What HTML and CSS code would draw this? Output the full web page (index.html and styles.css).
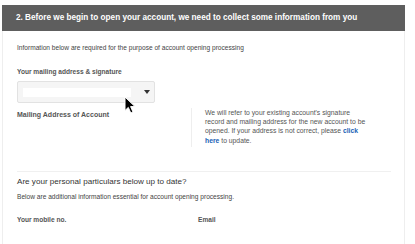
FILE: index.html
```html
<!DOCTYPE html>
<html lang="en">
<head>
    <meta charset="UTF-8">
    <title>Account Opening</title>
    <link rel="stylesheet" href="styles.css">
</head>
<body>
    <div class="panel">
        <div class="panel-head">2. Before we begin to open your account, we need to collect some information from you</div>
        <div class="panel-body">
            <p class="intro">Information below are required for the purpose of account opening processing</p>

            <p class="label">Your mailing address &amp; signature</p>
            <div class="select-box">
                <div class="select-value"></div>
                <span class="select-arrow"></span>
                <svg class="cursor" width="13" height="18" viewBox="0 0 13 18">
                    <path d="M1 1 L1 14.5 L4.3 11.4 L6.8 17 L9 16 L6.6 10.6 L11 10.6 Z" fill="#000" stroke="#fff" stroke-width="1"/>
                </svg>
            </div>

            <div class="address-row">
                <div class="address-label">Mailing Address of Account</div>
                <div class="address-note">
                    <span class="note-line">We will refer to your existing account's signature</span>
                    <span class="note-line">record and mailing address for the new account to be</span>
                    <span class="note-line">opened. If your address is not correct, please <a href="#">click</a></span>
                    <span class="note-line"><a href="#">here</a> to update.</span>
                </div>
            </div>

            <hr class="divider">

            <h2 class="section-title">Are your personal particulars below up to date?</h2>
            <p class="intro">Below are additional information essential for account opening processing.</p>

            <div class="field-row">
                <div class="label">Your mobile no.</div>
                <div class="label">Email</div>
            </div>
        </div>
    </div>
</body>
</html>
```

FILE: styles.css
```css
body {
    margin: 0;
    font-family: "Liberation Sans", Arial, sans-serif;
    background-color: #fff;
    color: #444;
}

.panel {
    margin: 5px 0 0 2px;
    width: 403px;
    height: 239px;
    border-left: 1px solid #eee;
    border-right: 1px solid #eee;
    box-sizing: border-box;
}

.panel-head {
    background-color: #5e5e5e;
    color: #fff;
    font-weight: bold;
    font-size: 8.2px;
    height: 26px;
    line-height: 26px;
    padding-left: 14px;
    margin: 0 -1px;
}

.panel-body {
    padding: 0 14px;
}

.intro {
    margin: 0;
    font-size: 6.6px;
    line-height: 8px;
    color: #444;
}

.panel-body > .intro:first-child {
    padding-top: 13px;
}

.label {
    margin: 0;
    font-size: 6.6px;
    line-height: 8px;
    font-weight: bold;
    color: #555;
}

.panel-body > .label {
    margin-top: 16px;
}

.select-box {
    position: relative;
    margin-top: 5px;
    width: 138px;
    height: 22px;
    background-color: #f5f5f5;
    border: 1px solid #e2e2e2;
    border-radius: 2px;
    box-sizing: border-box;
    display: flex;
    align-items: center;
    padding-left: 5px;
}

.select-value {
    width: 108px;
    height: 9px;
    background-color: #fff;
}

.select-arrow {
    margin-left: 13px;
    width: 0;
    height: 0;
    border-left: 3px solid transparent;
    border-right: 3px solid transparent;
    border-top: 4px solid #333;
}

.cursor {
    position: absolute;
    left: 106px;
    top: 14px;
}

.address-row {
    display: flex;
    margin-top: 5px;
}

.address-label {
    width: 174px;
    font-size: 7px;
    line-height: 9px;
    font-weight: bold;
    color: #555;
    padding-top: 2px;
}

.address-note {
    border-left: 1px solid #eee;
    padding: 0 0 2px 13px;
    width: 165px;
    font-size: 6.8px;
    line-height: 9.2px;
    color: #555;
}

.note-line {
    display: block;
    white-space: nowrap;
}

.address-note a {
    color: #1a62b5;
    font-weight: bold;
    text-decoration: none;
}

.divider {
    border: none;
    border-top: 1px solid #f0f0f0;
    margin: 24px 0 0 0;
    width: 374px;
}

.section-title {
    margin: 5px 0 6px 0;
    font-size: 8.1px;
    line-height: 10px;
    font-weight: normal;
    color: #333;
}

.field-row {
    display: flex;
    margin-top: 15px;
}

.field-row .label {
    width: 181px;
}
```
